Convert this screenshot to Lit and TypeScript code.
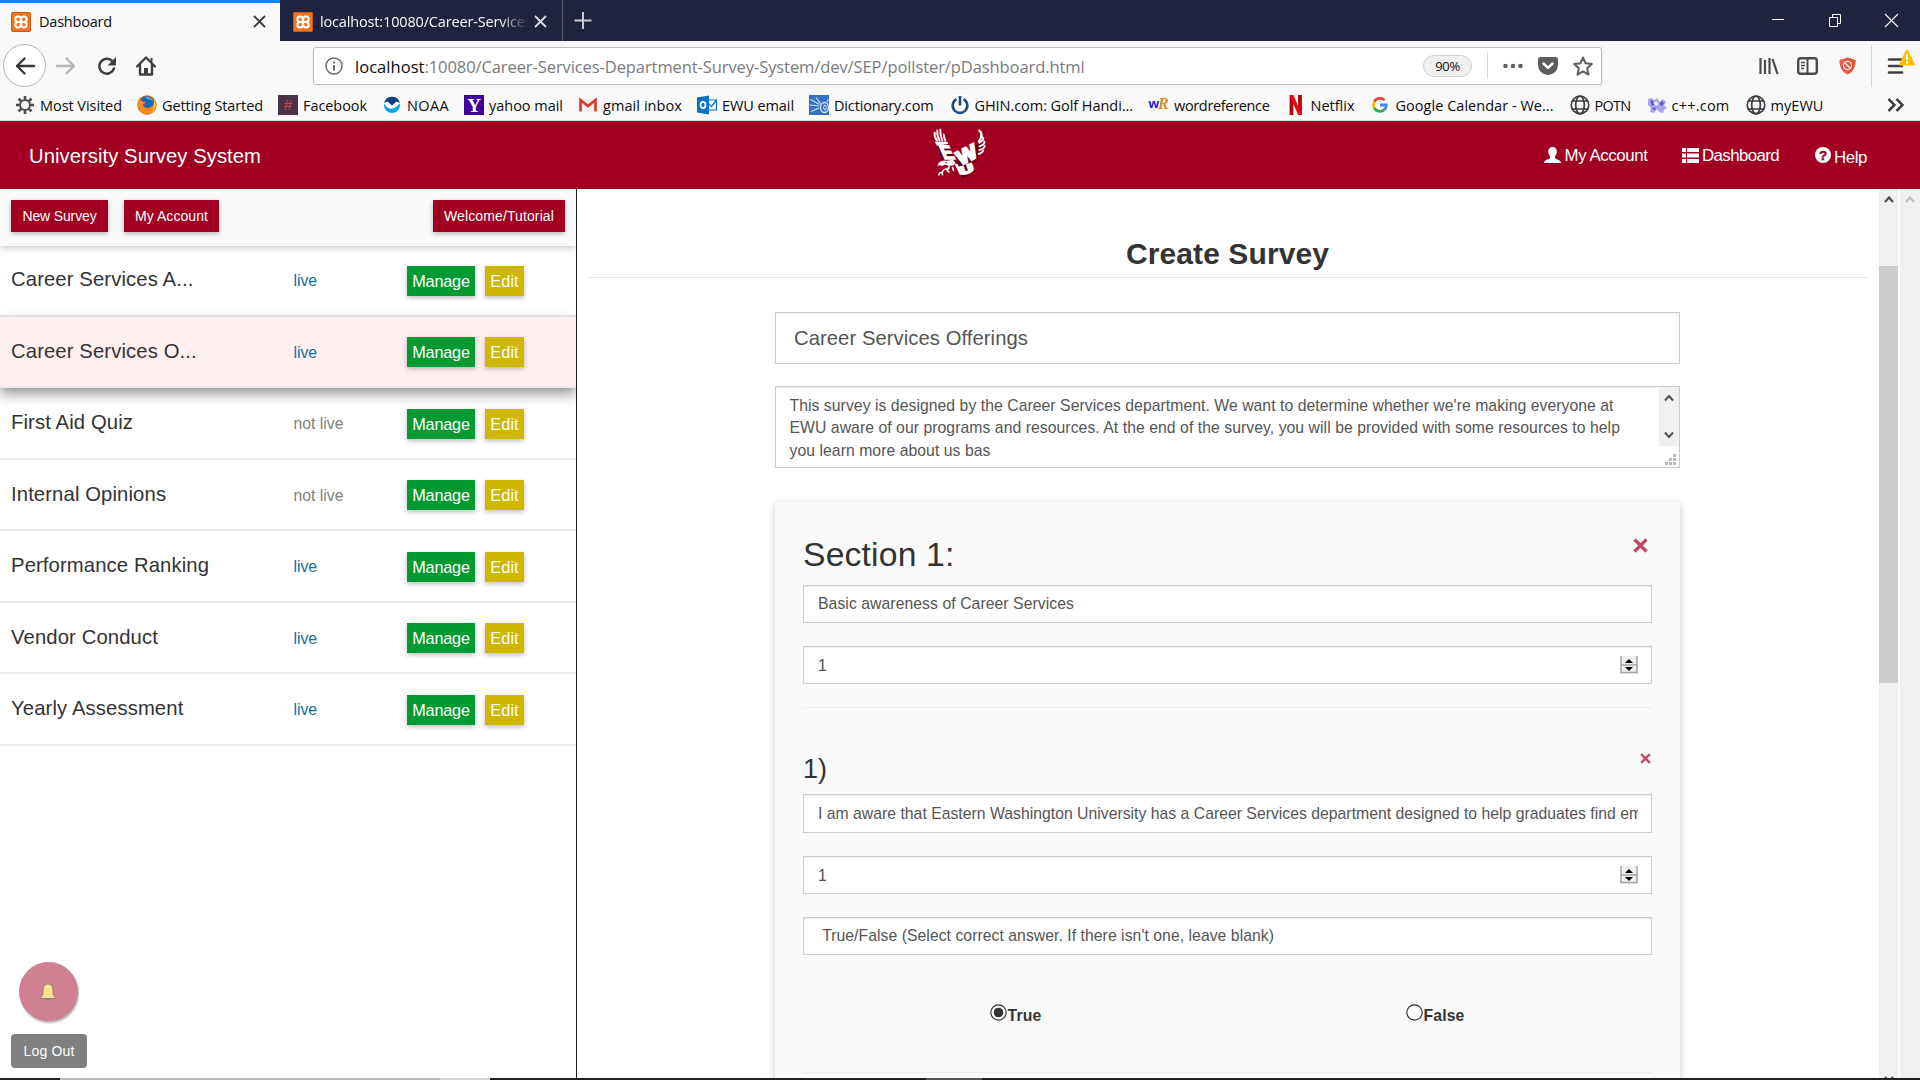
import { LitElement, html, svg, css, nothing } from "lit";
import { customElement, property } from "lit/decorators.js";

/** One-line label whose tracking is adjusted so that it spans a given width. */
@customElement("fit-text")
class FitText extends LitElement {
  @property({ type: Number }) w = 0;
  @property() text = "";
  static styles = css`
    :host { display: inline-block; white-space: pre; }
  `;
  render() {
    return html`<span>${this.text}</span>`;
  }
  firstUpdated() {
    const s = this.renderRoot.querySelector("span") as HTMLElement;
    const n = s.getBoundingClientRect().width;
    if (this.w && n) this.style.letterSpacing = `${(this.w - n) / this.text.length}px`;
  }
}

const xampp = html`<svg width="20" height="20" viewBox="0 0 20 20">
  <rect width="20" height="20" rx="2" fill="#ee7621"/><rect x=".5" y=".5" width="19" height="19" rx="2" fill="none" stroke="#c85a10"/>
  <path d="M4.300 7.200C4.300 3.500 9.500 3.700 9.800 7v6c-.3 3.300-5.500 3.500-5.500-.3M7 10h6M15.700 12.800c0 3.700-5.200 3.500-5.500.2V7c.3-3.300 5.500-3.500 5.500.2 0 1.800-1 2.600-2.700 2.800 1.700.2 2.700 1 2.700 2.800M4.300 7.200c0 1.800 1 2.600 2.700 2.800-1.700.2-2.700 1-2.700 2.700" fill="none" stroke="#fff" stroke-width="2"/></svg>`;

const globe = svg`<g fill="none" stroke="#3e3e40" stroke-width="1.700"><circle cx="10" cy="10" r="8.800"/><ellipse cx="10" cy="10" rx="4.300" ry="8.800"/><path d="M2.500 6h15M2.500 14h15" /></g>`;

const bookmarks = [
  { t: "Most Visited", w: 82, i: svg`<g stroke="#4a4a4c" fill="none"><circle cx="10" cy="10" r="5" stroke-width="2"/><path stroke-width="2.600" d="M10 1v3.500M10 15.500V19M1 10h3.500M15.500 10H19M3.600 3.600l2.500 2.500M13.900 13.900l2.500 2.500M3.600 16.400l2.500-2.500M13.900 6.100l2.500-2.500"/></g>` },
  { t: "Getting Started", w: 101, i: svg`<circle cx="10" cy="10" r="9.700" fill="#e66000"/><path d="M4 3.500A8 8 0 0 1 15.500 4c2 3 1.500 6 0 8-3 3-8 2-10-1z" fill="#1b66b5"/><path d="M8 2c4-1 7 1 8 4-3-2-6-1-8-4z" fill="#3fa7e0"/><path d="M.5 8C1 5 2 4 3 3c0 2 1 3 2.500 3.500l3 .5c0 1.500-2 1.500-2.500 3 1 3 5 4 8 2 3-2 3.500-5 2.500-8 4 5 3 11-1 13.500C9 21 0 18 .5 8z" fill="#f28c1c"/><path d="M17 4.500c3 5 1.500 10-2 12.500 2-4 2.500-8 2-12.500z" fill="#ffd23c"/>` },
  { t: "Facebook", w: 64, i: svg`<rect width="20" height="20" fill="#4a3346"/><text x="10" y="15" text-anchor="middle" font-family="Liberation Sans" font-size="15" fill="#d0404f">#</text>` },
  { t: "NOAA", w: 42, i: svg`<circle cx="10" cy="10" r="8" fill="#0aa4e4"/><path d="M2.500 7A8 8 0 0 1 17.500 7c-1 3-2 4-4.500 6l-3 1c-3-1-6-3-7.500-7z" fill="#133f86"/><path d="M2 8l3.500-1.500L10 10.500l4.500-4L18 8c-1 2-4 5-7.500 6.500C7 14 3 11 2 8z" fill="#fff"/><path d="M2 10c2 3 5 4.500 9 3.500 3-1 5-3 6.500-5A8 8 0 0 1 2 10z" fill="#0aa4e4"/>` },
  { t: "yahoo mail", w: 74, i: svg`<rect width="20" height="20" fill="#41009b"/><text x="10" y="16.500" text-anchor="middle" font-family="Liberation Serif" font-weight="bold" font-size="19" fill="#fff">Y</text>` },
  { t: "gmail inbox", w: 79, i: svg`<path d="M1.500 4h17v12.500h-17z" fill="#eee"/><path d="M2.500 16.500V5L10 11l7.500-6v11.500" fill="none" stroke="#d9382b" stroke-width="2.600"/>` },
  { t: "EWU email", w: 72, i: svg`<path d="M10 5h9.500v10H10z" fill="#fff" stroke="#0b6fc2" stroke-width="1.200"/><path d="m11 8 3.500 3.500L19.500 5" fill="none" stroke="#0b6fc2" stroke-width="1.300"/><path d="m0 2.500 12-2v19l-12-2z" fill="#0a72c6"/><ellipse cx="6" cy="10" rx="2.500" ry="3.200" fill="none" stroke="#fff" stroke-width="1.700"/>` },
  { t: "Dictionary.com", w: 99.500, i: svg`<rect width="20" height="20" fill="#3571c2"/><path d="M1.500 4.500l9 5M7 2.500l4.500 6M1 10l9 1M2 16.500l8-3.500" stroke="#d5e3f5" stroke-width="1.200" fill="none"/><ellipse cx="15.500" cy="12.500" rx="4" ry="5" fill="none" stroke="#d5e3f5" stroke-width="1.400"/><ellipse cx="16" cy="12.500" rx="1.300" ry="2.500" fill="none" stroke="#d5e3f5"/><path d="M18 7l1.500-3" stroke="#d5e3f5"/>` },
  { t: "GHIN.com: Golf Handi...", w: 158.500, i: svg`<rect width="20" height="20" fill="#fff"/><path d="M6.500 4.200a7.300 7.300 0 1 0 7 0" fill="none" stroke="#1b4f80" stroke-width="2.600"/><path d="M10 1v9.500" stroke="#1b4f80" stroke-width="2.600"/>` },
  { t: "wordreference", w: 95.5, i: svg`<text x="-.5" y="13" font-family="Liberation Sans" font-weight="bold" font-size="13.500" fill="#1c14d8">w</text><text x="9" y="14" font-family="Liberation Serif" font-style="italic" font-weight="bold" font-size="16" fill="#dd8a20">R</text>` },
  { t: "Netflix", w: 44, i: svg`<path d="M5.500 0v20M14 0v20" stroke="#b1060f" stroke-width="3.800"/><path d="M3.600 0h3.800l8.500 20h-3.800z" fill="#e50914"/>` },
  { t: "Google Calendar - We...", w: 158, i: svg`<circle cx="9" cy="10" r="9" fill="#fff"/><g fill="none" stroke-width="2.800"><path d="M3.300 6.800A6.500 6.500 0 0 1 13.600 5.300" stroke="#ea4335"/><path d="M3.300 6.800a6.500 6.500 0 0 0 0 6.200" stroke="#fbbc05"/><path d="M3.300 13A6.500 6.500 0 0 0 13.500 14.600" stroke="#34a853"/><path d="M13.500 14.600A6.500 6.500 0 0 0 15.400 10H9" stroke="#4285f4"/></g>` },
  { t: "POTN", w: 36, i: globe },
  { t: "c++.com", w: 58, i: svg`<path d="m1 4 4-1 2 2 4-2 1 4 4-3 3 3-2 3 3 3-3 2-1 3-4-1-2-3-3 4-4-1 1-4-3-3z" fill="#a9a6ee"/><path d="m3 5 3 1 2 3-3 2zM12 9l3-3 2 2-2 3zM5 14l3-2 1 3z" fill="#5a55c8"/><path d="m6 8 3-2 3 3-3 2z" fill="#e9e8ff"/>` },
  { t: "myEWU", w: 53, i: globe },
];

const surveys = [
  { n: "Career Services A...", live: true },
  { n: "Career Services O...", live: true, active: true },
  { n: "First Aid Quiz", live: false },
  { n: "Internal Opinions", live: false },
  { n: "Performance Ranking", live: true },
  { n: "Vendor Conduct", live: true },
  { n: "Yearly Assessment", live: true },
];

@customElement("browser-chrome")
class BrowserChrome extends LitElement {
  static styles = css`
    :host { display: block; height: 121px; background: #f9f9fa; font: 15px/20px "Open Sans", "Noto Sans", sans-serif; color: #0c0c0d; }
    svg { display: block; flex: none; overflow: visible; }
    .tabs { height: 41px; display: flex; background: #202340; }
    .tab { display: flex; align-items: center; box-sizing: border-box; padding-top: 2px; }
    .on { width: 280px; background: #f9f9fa; border-top: 3px solid #0a84ff; padding: 0 14px 1px 11px; }
    .off { width: 283px; padding-left: 13px; padding-right: 15px; color: #f9f9fa; border-right: 1px solid #5d5f75; }
    .off .label { width: 208px; overflow: hidden; -webkit-mask-image: linear-gradient(90deg, #000 180px, transparent 208px); }
    .label { margin-left: 8px; font-size: 14.500px; flex: 1; }
    .off .label { flex: none; margin-left: 7px; margin-right: 6px; }
    .plus { margin: 12px 0 0 11px; }
    .win { margin-left: auto; display: flex; padding: 14px 22px 0 0; gap: 44.500px; }
    .nav { height: 48px; display: flex; align-items: center; padding-top: 1px; box-sizing: border-box; }
    .back { width: 41px; height: 41px; border: 1px solid #b4b4b6; border-radius: 50%; background: #fff; margin-left: 3px; display: grid; place-items: center; box-sizing: content-box; }
    .url { box-sizing: border-box; width: 1289px; height: 38px; margin-left: 157px; border: 1px solid #bcbcbd; border-radius: 3px; background: #fff; box-shadow: 0 1px 4px rgba(0,0,0,.06); display: flex; align-items: center; padding-left: 11px; }
    .addr { margin-left: 12px; padding-top: 2px; font-size: 16.500px; color: #7a7a7c; display: flex; flex: 1; }
    .host { color: #0c0c0d; }
    .pill { box-sizing: border-box; width: 49px; height: 22px; border: 1px solid #cfcfd0; background: #f0f0f1; border-radius: 11px; text-align: center; font-size: 13px; line-height: 21px; letter-spacing: -.3px; margin-right: 15px; }
    .vline { width: 1px; height: 27px; background: #d7d7db; }
    .bm { height: 32px; display: flex; align-items: center; gap: 16px; padding-left: 15px; box-sizing: border-box; border-bottom: 1px solid #d8d8da; font-size: 14.500px; }
    .b { display: flex; align-items: center; gap: 5px; flex: none; }
    .b:nth-child(-n + 7) { margin-right: -1px; }
    .b fit-text { margin-top: 2px; }
  `;
  render() {
    const x = (c: string) => html`<svg width="13" height="13" viewBox="0 0 13 13"><path d="M1 1l11 11M12 1 1 12" stroke=${c} stroke-width="1.800"/></svg>`;
    return html`
      <div class="tabs">
        <div class="tab on">${xampp}<div class="label"><fit-text w="73" text="Dashboard"></fit-text></div>${x("#3a3a3c")}</div>
        <div class="tab off">${xampp}<div class="label"><fit-text w="216" text="localhost:10080/Career-Services-"></fit-text></div>${x("#dcdce2")}</div>
        <svg class="plus" width="18" height="18" viewBox="0 0 18 18"><path d="M9 0v17M.5 8.500h17" stroke="#c9cad3" stroke-width="2"/></svg>
        <div class="win">
          <svg width="12" height="13" viewBox="0 0 12 13"><path d="M0 5.500h12" stroke="#fff"/></svg>
          <svg width="12" height="13" viewBox="0 0 12 13"><path d="M.5 3.500h8v9h-8zM3.500 3V.5h8v9h-3" fill="none" stroke="#fff"/></svg>
          <svg width="13" height="13" viewBox="0 0 13 13"><path d="M0 0l13 13M13 0 0 13" stroke="#fff" stroke-width="1.100"/></svg>
        </div>
      </div>
      <div class="nav">
        <div class="back"><svg width="20" height="18" viewBox="0 0 20 18"><path d="M19 9H2M9.500 1.500 2 9l7.500 7.500" fill="none" stroke="#38383a" stroke-width="2.400" stroke-linecap="round" stroke-linejoin="round"/></svg></div>
        <svg style="margin-left:10px" width="20" height="18" viewBox="0 0 20 18"><path d="M1 9h17M10.500 1.500 18 9l-7.500 7.500" fill="none" stroke="#b5b5b7" stroke-width="2.300" stroke-linecap="round" stroke-linejoin="round"/></svg>
        <svg style="margin-left:21px" width="20" height="20" viewBox="0 0 20 20"><path d="M15.500 5.200A7.500 7.500 0 1 0 17 12.500" fill="none" stroke="#404042" stroke-width="2.500" stroke-linecap="round"/><path d="M19 1v8.500h-8.500z" fill="#404042"/></svg>
        <svg style="margin-left:19px" width="20" height="20" viewBox="0 0 20 20"><path d="M1 10.500 10 1.500l9 9M4 9v9.500h12V9" fill="none" stroke="#404042" stroke-width="2.400" stroke-linecap="round" stroke-linejoin="round"/><path d="M8 12h4v7H8z" fill="#404042"/><path d="M14.500 2h2v4h-2z" fill="#404042"/></svg>
        <div class="url">
          <svg width="18" height="18" viewBox="0 0 18 18"><circle cx="9" cy="9" r="8" fill="none" stroke="#6b6b6d" stroke-width="1.500"/><path d="M9 8v5.500M9 4.500v2" stroke="#6b6b6d" stroke-width="2"/></svg>
          <div class="addr"><fit-text class="host" w="69.5" text="localhost"></fit-text><fit-text w="660" text=":10080/Career-Services-Department-Survey-System/dev/SEP/pollster/pDashboard.html"></fit-text></div>
          <div class="pill">90%</div><div class="vline"></div>
          <svg style="margin-left:15px" width="20" height="20" viewBox="0 0 20 20"><g fill="#5e5e60"><circle cx="2.500" cy="10" r="2.300"/><circle cx="10" cy="10" r="2.300"/><circle cx="17.500" cy="10" r="2.300"/></g></svg>
          <svg style="margin-left:15px" width="20" height="20" viewBox="0 0 20 20"><path d="M2.500 1h15A2.500 2.500 0 0 1 20 3.500V9a10 10 0 0 1-20 0V3.500A2.500 2.500 0 0 1 2.500 1z" fill="#5e5e60"/><path d="m5.500 7.500 4.500 4.300 4.500-4.300" fill="none" stroke="#fff" stroke-width="2.500" stroke-linecap="round" stroke-linejoin="round"/></svg>
          <svg style="margin:0 8px 0 15px" width="20" height="20" viewBox="0 0 20 20"><path d="m10 1.500 2.600 5.800 6.200.7-4.600 4.300 1.300 6.300L10 15.400l-5.500 3.200 1.300-6.300L1.200 8l6.200-.7z" fill="none" stroke="#5e5e60" stroke-width="2" stroke-linejoin="round"/></svg>
        </div>
        <svg style="margin-left:157px" width="20" height="18" viewBox="0 0 20 18"><path d="M1.500 1v16M6 3v14M10.500 1v16" stroke="#484a4c" stroke-width="2.200"/><path d="m13.500 2 5 15" stroke="#484a4c" stroke-width="2.200"/></svg>
        <svg style="margin-left:18px" width="21" height="18" viewBox="0 0 21 18"><rect x="1.200" y="1.200" width="18.600" height="15.600" rx="2.500" fill="none" stroke="#484a4c" stroke-width="2.400"/><path d="M10.500 1v16" stroke="#484a4c" stroke-width="2"/><path d="M4 5.500h4M4 8.500h4M4 11.500h3" stroke="#484a4c" stroke-width="1.300"/></svg>
        <svg style="margin-left:21px" width="17" height="18" viewBox="0 0 17 18"><path d="M8.500.5 16.500 3c0 7-1.500 11-8 14.500C2 14 .5 10 .5 3z" fill="#e8604c"/><path d="M8.500.5 16.500 3c0 7-1.500 11-8 14.500z" fill="#d9572a" opacity=".6"/><circle cx="8.500" cy="8.500" r="4" fill="none" stroke="#fff" stroke-width="1.100"/><path d="m6 6 5 5" stroke="#fff" stroke-width="1.100"/></svg>
        <div class="vline" style="height:42px;margin-left:15px"></div>
        <svg style="margin-left:16px" width="28" height="40" viewBox="0 0 28 40"><path d="M1 13.500h13M1 20h13M1 26.500h13" stroke="#404042" stroke-width="2.600" stroke-linecap="round"/><path d="M19 4.500 26 18.500H12z" fill="#ffbf00" stroke="#ffbf00" stroke-width="2" stroke-linejoin="round"/><path d="M19 8v6M19 15.500v2" stroke="#fff" stroke-width="2"/></svg>
      </div>
      <div class="bm">
        ${bookmarks.map((b) => html`<div class="b"><svg width="20" height="20" viewBox="0 0 20 20">${b.i}</svg><fit-text .w=${b.w} .text=${b.t}></fit-text></div>`)}
        <svg style="margin-left:47px" width="18" height="14" viewBox="0 0 18 14"><path d="m1.500 1 6 6-6 6M9.500 1l6 6-6 6" fill="none" stroke="#404042" stroke-width="2.500"/></svg>
      </div>`;
  }
}

@customElement("site-header")
class SiteHeader extends LitElement {
  static styles = css`
    :host { display: grid; grid-template-columns: 1fr 54px 1fr; height: 68px; background: #a10022; color: #fff; font: 16.875px/20px "Liberation Sans", Arial, sans-serif; }
    .title { font-size: 20.250px; padding: 25px 0 0 29px; }
    .logo { margin-top: 7px; }
    nav { display: flex; justify-content: flex-end; padding: 25px 53px 0 0; }
    a { display: flex; gap: 3.500px; }
    a + a { margin-left: 34px; }
    a.help { margin-left: 35.500px; padding-top: 2px; }
    a.help svg { margin-top: -1px; }
    svg { display: block; margin-top: 1px; overflow: visible; }
  `;
  render() {
    return html`
      <div class="title"><fit-text w="232" text="University Survey System"></fit-text></div>
      <svg class="logo" width="54" height="52" viewBox="99 24 162 156">
        <g transform="translate(3 4)" fill="#5d0014"><path d="M106 66h32l28 62-16 8-26-16z"/><path d="M165 100l70-34-4 50-30 22 24 12-42 24z"/></g>
        <g fill="none" stroke="#fff" stroke-linecap="round" stroke-width="5.500">
          <path d="M104 38q-2 12 7 24"/><path d="M112 31q-2 16 7 31"/><path d="M121 29q-1 18 6 33"/><path d="M131 43q1 10 5 19"/>
          <path d="M238 32q14 12 -1 32" stroke-width="7"/><path d="M248 52q7 6-10 16M253 65q2 9-15 14M254 78q-1 9-16 12M250 92q-3 7-14 10"/>
        </g>
        <path d="M104 65h38l3 7-34 5z" fill="#fff"/>
        <g font-family="Liberation Sans, Arial, sans-serif" font-weight="bold" fill="#fff" stroke="#fff" stroke-linejoin="miter">
          <text transform="translate(131 116) skewX(24)" font-size="58" textLength="36" lengthAdjust="spacingAndGlyphs" stroke-width="4">E</text>
          <text transform="translate(181 137) rotate(-27) skewX(-4)" font-size="60" textLength="62" lengthAdjust="spacingAndGlyphs" stroke-width="6">W</text>
          <text transform="translate(182 166) rotate(-18)" font-size="34" textLength="42" lengthAdjust="spacingAndGlyphs" stroke-width="6">U</text>
        </g>
        <path d="M114 131q10-12 27-9l17-3 8 8-4 9-14 2-13-4-9 4q-8-4-12-1l-2 4z" fill="#fff"/>
        <path d="M163 130l10 3 12 28-5 4z" fill="#fff"/>
        <path d="M117 167q-1-11 9-9l2 8M126 158q4-12 17-12l6-7M148 143l-6 9 6 5M157 140l4 13" stroke="#fff" stroke-width="4.500" fill="none"/>
        <circle cx="139" cy="128" r="2" fill="#5d0014"/>
      </svg>
      <nav>
        <a><svg width="17" height="16" viewBox="0 0 17 16"><path d="M8.500 0c3 0 4.500 2 4.300 5-.2 2-1 3-1.800 4.200V11c1 1.500 6 1.800 6 5H0c0-3.200 5-3.500 6-5V9.200C5.200 8 4.400 7 4.200 5 4 2 5.500 0 8.500 0z" fill="#fff"/></svg><fit-text w="83" text="My Account"></fit-text></a>
        <a><svg style="margin-top:2px" width="17" height="16" viewBox="0 0 17 16"><path d="M0 0h4v4H0zM5 0h12v4H5zM0 5.500h4v4H0zM5 5.500h12v4H5zM0 11h4v4H0zM5 11h12v4H5z" fill="#fff"/></svg><fit-text w="77" text="Dashboard"></fit-text></a>
        <a class="help"><svg width="16" height="16" viewBox="0 0 16 16"><circle cx="8" cy="8" r="8" fill="#fff"/><text x="8" y="12.700" text-anchor="middle" font-family="Liberation Sans" font-weight="bold" font-size="13.500" fill="#a10022" stroke="#a10022" stroke-width=".5">?</text></svg><fit-text w="33" text="Help"></fit-text></a>
      </nav>`;
  }
}

@customElement("survey-list")
class SurveyList extends LitElement {
  static styles = css`
    :host { display: block; width: 576px; flex: none; overflow: hidden; border-right: 1px solid #222; background: #fff; font: 15.750px/22px "Liberation Sans", Arial, sans-serif; color: #333; }
    .bar { height: 57px; background: #fafafa; box-shadow: 0 2px 6px rgba(0,0,0,.22); display: flex; padding: 11px 11px 0; box-sizing: border-box; position: relative; z-index: 1; margin-bottom: -1px; }
    .bar button { font: 14px/16px "Liberation Sans", Arial, sans-serif; height: 32px; background: #a10022; padding: 0; }
    button { border: 0; color: #fff; box-shadow: 0 2px 5px rgba(0,0,0,.26); }
    .n { width: 97px; } .m { width: 95px; margin-left: 16px; } .w { width: 132px; margin-left: auto; }
    .row { height: 71.500px; box-sizing: border-box; border-bottom: 2px solid #ebebeb; display: grid; grid-template-columns: 282.500px 113.500px 78px 1fr; padding: 0 0 0 11px; position: relative; }
    .row.active { background: #ffeff1; box-shadow: 0 6px 12px rgba(0,0,0,.42); }
    .name { font-size: 20.250px; letter-spacing: .12px; padding-top: 23px; }
    .st { padding-top: 25px; color: #0d6fa3; }
    .st.off { color: #808080; }
    .row button { height: 30px; margin-top: 20.500px; font: 16.300px/18px "Liberation Sans", Arial, sans-serif; padding: 0; }
    .g { width: 68px; background: #049a33; } .e { width: 39px; background: #cfb600; }
  `;
  render() {
    return html`
      <div class="bar"><button class="n"><fit-text w="74" text="New Survey"></fit-text></button><button class="m"><fit-text w="73" text="My Account"></fit-text></button><button class="w"><fit-text w="110" text="Welcome/Tutorial"></fit-text></button></div>
      ${surveys.map((s) => html`<div class="row ${s.active ? "active" : ""}"><div class="name">${s.n}</div><div class="st ${s.live ? "" : "off"}">${s.live ? "live" : "not live"}</div><div><button class="g"><fit-text w="57.5" text="Manage"></fit-text></button></div><div><button class="e"><fit-text w="28.5" text="Edit"></fit-text></button></div></div>`)}`;
  }
}

@customElement("survey-editor")
class SurveyEditor extends LitElement {
  static styles = css`
    :host { display: block; flex: 1; min-width: 0; padding: 47px 12px 0 11px; box-sizing: border-box; font: 15.750px/22.500px "Liberation Sans", Arial, sans-serif; color: #333; overflow: hidden; }
    h1 { margin: 0; font-size: 30px; line-height: 36px; padding-bottom: 5px; text-align: center; border-bottom: 1px solid #e5e5e5; }
    .col { width: 905px; margin: 34px auto 0; }
    .f { box-sizing: border-box; border: 1px solid #ccc; background: #fff; color: #555; box-shadow: inset 0 1px 1px rgba(0,0,0,.075); display: flex; white-space: pre; overflow: hidden; }
    .big { height: 52px; font-size: 20.250px; line-height: 50px; padding-left: 18px; }
    .area { height: 82px; margin-top: 22px; justify-content: space-between; }
    .copy { padding: 7.600px 0 0 13.500px; white-space: normal; }
    .copy fit-text { display: block; }
    .sb { width: 20px; display: flex; flex-direction: column; align-items: center; white-space: normal; }
    .track { width: 20px; height: 59px; background: #f0f0f0; display: flex; flex-direction: column; justify-content: space-between; align-items: center; padding: 7px 0; box-sizing: border-box; }
    .grip { margin-top: 8px; margin-left: 2px; }
    .card { margin-top: 34px; height: 620px; background: #fafafa; box-shadow: 0 2px 8px rgba(0,0,0,.2); padding: 32px 28px 0; }
    .head { display: flex; justify-content: space-between; }
    h2 { margin: 0; font-weight: 400; font-size: 33.750px; line-height: 40px; height: 51px; }
    h3 { margin: 0; font-weight: 400; font-size: 27px; line-height: 30px; }
    .in { height: 38px; line-height: 36px; padding: 0 13px 0 14px; align-items: center; }
    .in .t { flex: 1; min-width: 0; overflow: hidden; height: 36px; }
    .gap { margin-top: 23px; }
    .gap.in { line-height: 38px; }
    .gap.in.kind { line-height: 36px; }
    .in.long { height: 39px; line-height: 36px; }
    .long fit-text { letter-spacing: .015px; }
    .hr { height: 1px; background: #eee; }
    .radios { display: grid; grid-template-columns: 416px 1fr; padding: 49px 0 0 187px; font-weight: bold; height: 68px; }
    .r { display: flex; } .r svg { margin-top: 0; }
    .r fit-text { margin-top: 1px; margin-left: .500px; }
    svg { display: block; flex: none; }
  `;
  spin = html`<svg width="18" height="18" viewBox="0 0 18 18"><path d="M0 0h18v18H0z" fill="#eee"/><path d="M1 0v16.500h16V0M1 9h16" fill="none" stroke="#a6a6a6" stroke-width="1.500"/><path d="M5 7h8L9 3zM5 11h8l-4 4z" fill="#000"/></svg>`;
  field(t: string, cls = "", w = 0, spin = false) {
    return html`<div class="f in ${cls}"><div class="t"><fit-text .w=${w} .text=${t}></fit-text></div>${spin ? this.spin : nothing}</div>`;
  }
  x(s: number) {
    return html`<svg width=${s} height=${s} viewBox="0 0 15 15"><path d="M1.500 1.500l12 12M13.500 1.500l-12 12" stroke="#c04a63" stroke-width="3.200"/></svg>`;
  }
  render() {
    return html`
      <h1><fit-text w="203" text="Create Survey"></fit-text></h1>
      <div class="col">
        <div class="f big"><fit-text w="234" text="Career Services Offerings"></fit-text></div>
        <div class="f area">
          <div class="copy">
            <fit-text w="824" text="This survey is designed by the Career Services department. We want to determine whether we're making everyone at"></fit-text>
            <fit-text w="830.5" text="EWU aware of our programs and resources. At the end of the survey, you will be provided with some resources to help"></fit-text>
            <fit-text w="201" text="you learn more about us bas"></fit-text>
          </div>
          <div class="sb">
            <div class="track">
              <svg width="10" height="8" viewBox="0 0 10 8"><path d="M1 6.500 5 2l4 4.500" fill="none" stroke="#505050" stroke-width="2"/></svg>
              <svg width="10" height="8" viewBox="0 0 10 8"><path d="m1 1.500 4 4.500 4-4.500" fill="none" stroke="#505050" stroke-width="2"/></svg>
            </div>
            <svg class="grip" width="11" height="11" viewBox="0 0 11 11"><path d="M8 0h3v3H8zM4 4h3v3H4zM8 4h3v3H8zM0 8h3v3H0zM4 8h3v3H4zM8 8h3v3H8z" fill="#bababa"/></svg>
          </div>
        </div>
        <div class="card">
          <div class="head"><h2><fit-text w="151.5" text="Section 1:"></fit-text></h2><div style="padding:4px 4px 0 0">${this.x(15)}</div></div>
          ${this.field("Basic awareness of Career Services", "", 256)}
          ${this.field("1", "gap", 0, true)}
          <div class="hr gap"></div>
          <div class="head" style="padding-top:45px;height:41px"><h3 style="margin-top:1px">1)</h3><div style="padding:0 1px 0 0">${this.x(11)}</div></div>
          ${this.field("I am aware that Eastern Washington University has a Career Services department designed to help graduates find employment", "long", 0)}
          ${this.field("1", "gap", 0, true)}
          ${this.field(" True/False (Select correct answer. If there isn't one, leave blank)", "gap kind", 456)}
          <div class="radios">
            <div class="r"><svg width="17" height="17" viewBox="0 0 17 17"><circle cx="8.500" cy="8.500" r="7.700" fill="#fff" stroke="#333" stroke-width="1.200"/><circle cx="8.500" cy="8.500" r="4.800" fill="#333"/></svg><fit-text w="34" text="True"></fit-text></div>
            <div class="r"><svg width="17" height="17" viewBox="0 0 17 17"><circle cx="8.500" cy="8.500" r="7.700" fill="#fff" stroke="#333" stroke-width="1.200"/></svg><fit-text w="41" text="False"></fit-text></div>
          </div>
          <div class="hr"></div>
        </div>
      </div>`;
  }
}

@customElement("app-root")
class AppRoot extends LitElement {
  static styles = css`
    :host { display: block; width: 1920px; height: 1080px; overflow: hidden; background: #fff; position: relative; }
    main { display: flex; height: 891px; }
    .scroll { width: 19px; height: 891px; background: #f0f0f0; flex: none; display: flex; flex-direction: column; align-items: center; border-right: 2px solid #fdfdfd; box-sizing: content-box; overflow: hidden; }
    .scroll.outer { border: 0; width: 20px; }
    .scroll svg { margin-top: 6px; display: block; flex: none; }
    .thumb { width: 19px; height: 417px; background: #cdcdcd; margin-top: 63px; flex: none; }
    .scroll svg.down { margin-top: auto; margin-bottom: -4px; }
    .bell { position: absolute; left: 19px; top: 962px; width: 59px; height: 59px; border-radius: 50%; background: #cf8092; box-shadow: 1px 2px 2px rgba(0,0,0,.3); display: grid; place-items: center; }
    .bell svg { margin-right: 1px; }
    .out { position: absolute; left: 11px; top: 1034px; width: 76px; height: 34px; border-radius: 4px; background: #808080; color: #fff; text-align: center; font: 14px/34px "Liberation Sans", Arial, sans-serif; }
    .edge { position: absolute; left: 0; top: 1078px; width: 1920px; height: 2px; display: flex; background: #202022; }
    .e1 { width: 380px; margin-left: 60px; background: #b9b9b9; } .e2 { width: 50px; background: #d4d4d4; } .e3 { width: 56px; margin-left: 436px; background: #555; }
  `;
  up(c: string) {
    return html`<svg width="10" height="8" viewBox="0 0 10 8"><path d="M1 7 5 2.500 9 7" fill="none" stroke=${c} stroke-width="2.200"/></svg>`;
  }
  render() {
    return html`
      <browser-chrome></browser-chrome>
      <site-header></site-header>
      <main>
        <survey-list></survey-list>
        <survey-editor></survey-editor>
        <div class="scroll">${this.up("#505050")}<div class="thumb"></div><svg class="down" width="10" height="8" viewBox="0 0 10 8"><path d="m1 1 4 4.500L9 1" fill="none" stroke="#505050" stroke-width="2.200"/></svg></div>
        <div class="scroll outer">${this.up("#bdbdbd")}</div>
      </main>
      <div class="bell"><svg width="16" height="18" viewBox="0 0 16 18"><path d="M8 .8c3.500.5 5 3 5 6.200 0 4 .5 6 2.300 7.200v1.300H.7v-1.300C2.500 13 3 11 3 7 3 3.800 4.500 1.300 8 .8z" fill="#ffe08e" stroke="#8a7f72" stroke-width="1"/><path d="M6 16.300h4" stroke="#7c8a96" stroke-width="1.800"/></svg></div>
      <div class="out"><fit-text w="51" text="Log Out"></fit-text></div>
      <div class="edge"><div class="e1"></div><div class="e2"></div><div class="e3"></div></div>`;
  }
}
